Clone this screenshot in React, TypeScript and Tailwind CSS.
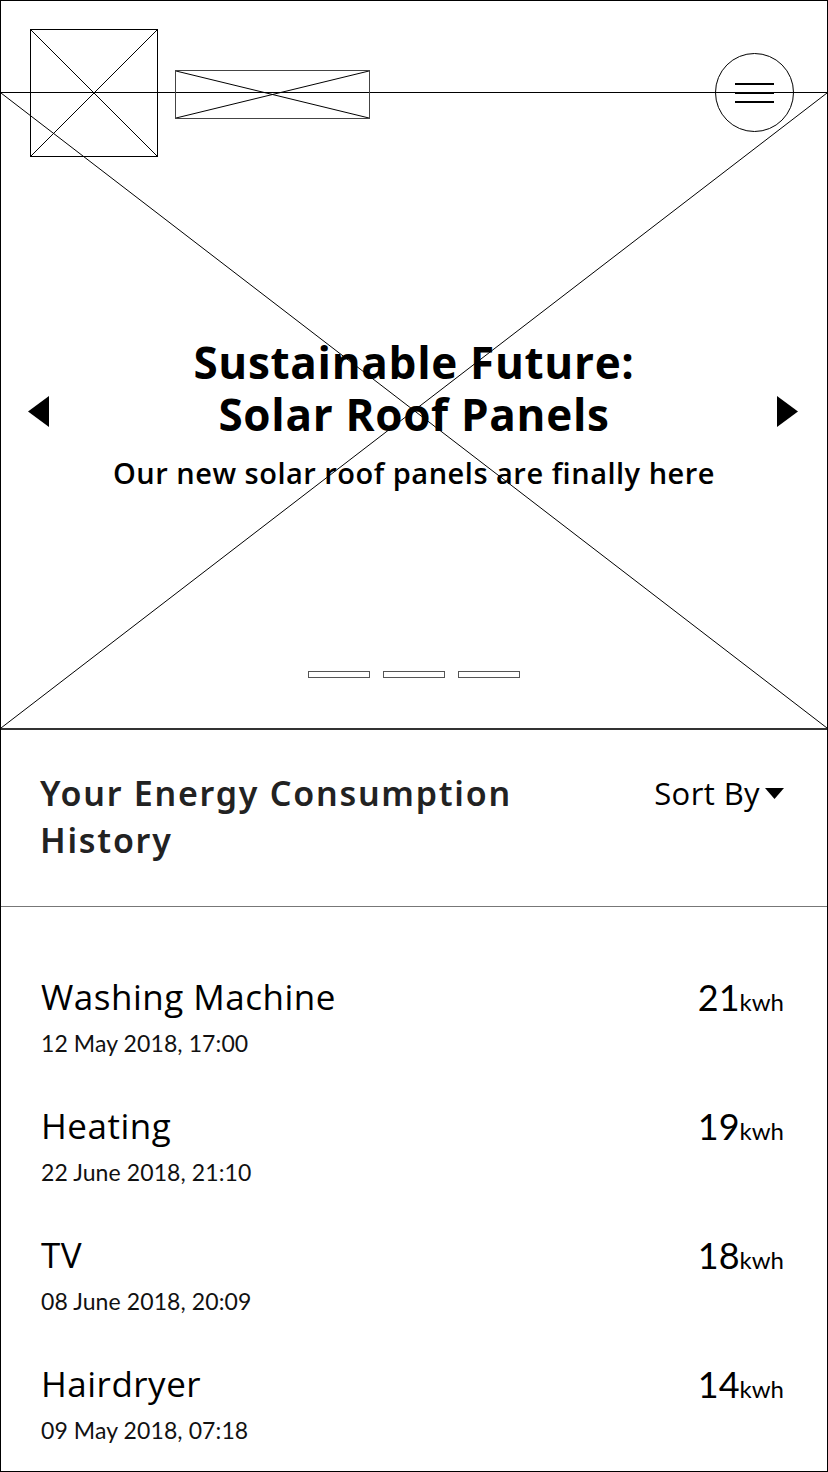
import React from 'react'

type Usage = {
  name: string
  date: string
  kwh: number
}

const usages: Usage[] = [
  { name: 'Washing Machine', date: '12 May 2018, 17:00', kwh: 21 },
  { name: 'Heating', date: '22 June 2018, 21:10', kwh: 19 },
  { name: 'TV', date: '08 June 2018, 20:09', kwh: 18 },
  { name: 'Hairdryer', date: '09 May 2018, 07:18', kwh: 14 },
]

// placeholder box with a cross, like a wireframe image
function Placeholder({ className }: { className: string }) {
  return (
    <div className={`relative ${className}`}>
      <svg className="absolute inset-0 w-full h-full" preserveAspectRatio="none" viewBox="0 0 100 100">
        <line x1="0" y1="0" x2="100" y2="100" stroke="#000" strokeWidth="1" vectorEffect="non-scaling-stroke" />
        <line x1="100" y1="0" x2="0" y2="100" stroke="#000" strokeWidth="1" vectorEffect="non-scaling-stroke" />
      </svg>
    </div>
  )
}

function Header() {
  return (
    <div className="absolute top-0 left-0 right-0 flex items-start px-[29px] pt-[28px]">
      {/* Logo */}
      <Placeholder className="w-[128px] h-[128px] border border-black" />
      {/* Wordmark */}
      <Placeholder className="w-[195px] h-[49px] border border-[#444] mt-[41px] ml-[17px]" />
      {/* Menu */}
      <button className="ml-auto mt-[24px] mr-[4px] w-[79px] h-[79px] rounded-full border border-black bg-transparent flex flex-col items-center justify-center gap-[7px]">
        <span className="block w-[39px] h-[2px] bg-black" />
        <span className="block w-[39px] h-[2px] bg-black" />
        <span className="block w-[39px] h-[2px] bg-black" />
      </button>
    </div>
  )
}

function Hero() {
  return (
    <div className="relative h-[638px] border-t border-black border-b-2 border-b-[#333]">
      <svg className="absolute inset-0 w-full h-full" preserveAspectRatio="none" viewBox="0 0 100 100">
        <line x1="0" y1="0" x2="100" y2="100" stroke="#000" strokeWidth="1" vectorEffect="non-scaling-stroke" />
        <line x1="100" y1="0" x2="0" y2="100" stroke="#000" strokeWidth="1" vectorEffect="non-scaling-stroke" />
      </svg>

      {/* carousel arrows */}
      <button className="absolute left-[27px] top-[303px]">
        <svg width="21" height="31" viewBox="0 0 21 31" className="block">
          <polygon points="21,0 21,31 0,15.5" fill="#000" />
        </svg>
      </button>
      <button className="absolute right-[29px] top-[303px]">
        <svg width="21" height="31" viewBox="0 0 21 31" className="block">
          <polygon points="0,0 0,31 21,15.5" fill="#000" />
        </svg>
      </button>

      <div className="relative h-full flex flex-col items-center text-center font-['Open_Sans',sans-serif] text-black">
        <h1 className="mt-[243px] text-[44px] leading-[52px] font-bold tracking-[0.7px]">
          Sustainable Future:
          <br />
          Solar Roof Panels
        </h1>
        <p className="mt-[13px] text-[29px] leading-[40px] font-semibold tracking-[0.5px]">
          Our new solar roof panels are finally here
        </p>

        {/* slide indicators */}
        <div className="mt-auto mb-[50px] flex gap-[13px]">
          <span className="block w-[62px] h-[7px] border border-[#555] bg-white" />
          <span className="block w-[62px] h-[7px] border border-[#555] bg-white" />
          <span className="block w-[62px] h-[7px] border border-[#555] bg-white" />
        </div>
      </div>
    </div>
  )
}

function ListHeader() {
  return (
    <div className="flex items-start justify-between pl-[39px] pr-[43px] pt-[40px] pb-[42px] border-b border-[#777]">
      <h2 className="text-[34px] leading-[47px] font-semibold text-[#222] font-['Noto_Sans',sans-serif] tracking-[1.75px] w-[500px]">
        Your Energy Consumption History
      </h2>
      <button className="flex items-center gap-[5px] text-[31px] leading-[47px] font-['Open_Sans',sans-serif] tracking-[0.4px] text-black">
        Sort By
        <svg width="19" height="11" viewBox="0 0 19 11">
          <polygon points="0,0 19,0 9.5,11" fill="#000" />
        </svg>
      </button>
    </div>
  )
}

function UsageRow({ usage }: { usage: Usage }) {
  return (
    <div className="flex items-start justify-between">
      <div className="flex flex-col gap-[8px]">
        <p className="text-[35px] leading-[44px] font-['Open_Sans',sans-serif] tracking-[0.5px] text-black">{usage.name}</p>
        <p className="text-[23px] leading-[32px] font-['Lato',sans-serif] tracking-[0.1px] text-[#111]">{usage.date}</p>
      </div>
      <p className="leading-[44px] font-['Lato',sans-serif] text-black">
        <span className="text-[36px]">{usage.kwh}</span>
        <span className="text-[24px]">kwh</span>
      </p>
    </div>
  )
}

export default function App() {
  return (
    <div className="relative w-[828px] h-[1472px] overflow-hidden bg-white border border-black">
      <div className="h-[91px]" />
      <Hero />
      <ListHeader />
      <div className="flex flex-col gap-[45px] pl-[40px] pr-[43px] pt-[68px]">
        {usages.map((u) => (
          <UsageRow key={u.name} usage={u} />
        ))}
      </div>
      <Header />
    </div>
  )
}
